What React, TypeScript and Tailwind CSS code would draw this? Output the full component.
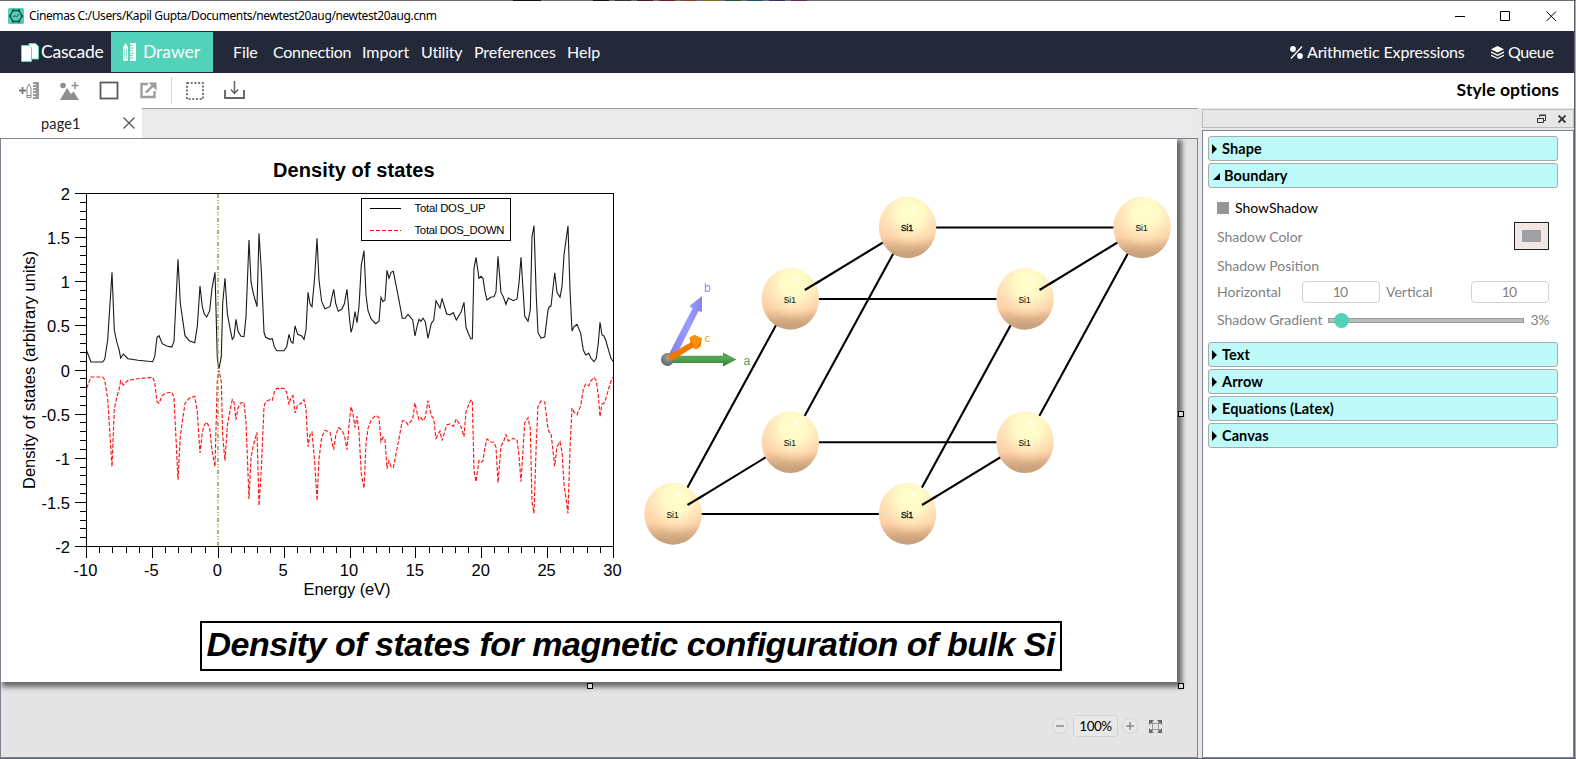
import React from "react";

const UP: number[][] = [
  [260,632],[273,666],[308,666],[314,658],[323,600],[336,397],[343,570],[350,605],[357,628],[362,654],[370,642],[384,656],[414,661],[458,665],[464,650],[471,592],[477,587],[487,611],[500,618],[515,621],[522,605],[534,358],[541,490],[555,587],[568,602],[584,608],[592,560],[600,438],[607,500],[613,522],[620,531],[629,512],[636,445],[645,397],[652,655],[657,686],[664,650],[668,490],[675,415],[682,520],[690,565],[697,598],[702,590],[708,538],[714,573],[722,588],[732,590],[738,530],[747,300],[753,425],[760,460],[771,500],[777,280],[784,390],[792,577],[797,592],[810,598],[817,596],[823,620],[830,632],[852,632],[860,620],[867,583],[873,605],[879,610],[885,558],[893,583],[905,588],[912,598],[918,570],[924,457],[930,492],[936,500],[944,410],[951,295],[957,420],[965,485],[975,506],
  [990,500],[996,470],[1001,448],[1007,490],[1015,514],[1025,508],[1033,492],[1041,448],[1048,530],[1053,577],[1058,560],[1065,515],[1071,548],[1077,500],[1084,375],[1092,332],[1098,465],[1104,512],[1113,536],[1127,551],[1137,544],[1143,472],[1149,485],[1155,480],[1161,391],[1167,415],[1173,397],[1180,394],[1187,430],[1195,470],[1207,535],[1215,535],[1224,523],[1238,540],[1245,588],[1251,560],[1257,538],[1263,544],[1269,535],[1276,545],[1284,595],[1294,550],[1301,541],[1308,482],[1320,504],[1326,475],[1340,522],[1350,525],[1360,518],[1369,540],[1383,517],[1392,487],[1398,562],[1405,580],[1412,596],[1417,596],[1422,385],[1428,352],[1437,415],[1443,409],[1449,415],[1455,455],[1461,480],[1473,471],[1482,470],[1488,455],[1494,349],[1503,458],[1510,470],[1518,493],[1525,474],[1540,482],[1551,477],[1557,430],[1563,352],[1574,528],[1584,544],[1591,510],[1596,290],[1602,257],[1609,470],[1614,578],[1623,594],[1634,591],[1644,510],[1648,500],[1653,498],[1664,398],[1671,457],[1680,472],[1686,440],[1692,345],[1704,257],[1710,450],[1716,573],[1722,560],[1731,553],[1742,580],[1750,630],[1757,645],[1766,640],[1773,655],[1782,665],[1789,655],[1795,610],[1800,547],[1806,585],[1812,588],[1818,603],[1826,632],[1833,655],[1840,665],
];
const upPts = UP.map(([x, y]) => `${(x / 3).toFixed(1)},${(140 + y / 3).toFixed(1)}`).join(" ");
const downPts = UP.map(([x, y]) => `${(x / 3).toFixed(1)},${(140 + (1377 - y) / 3).toFixed(1)}`).join(" ");

const yTicks = Array.from({ length: 41 }, (_, i) => i);
const yLabels = ["2", "1.5", "1", "0.5", "0", "-0.5", "-1", "-1.5", "-2"];
const xLabels = ["-10", "-5", "0", "5", "10", "15", "20", "25", "30"];

function Chart() {
  return (
    <g fontFamily="Liberation Sans, Arial, sans-serif" fill="#000">
      <text x="273" y="177" fontSize="20" fontWeight="bold" textLength="161.5">Density of states</text>
      <polyline points={upPts} fill="none" stroke="#1a1a1a" strokeWidth="1.1" />
      <polyline points={downPts} fill="none" stroke="#ff1414" strokeWidth="1.15" strokeDasharray="4 1.8" />
      <line x1="218" y1="194" x2="218" y2="546" stroke="#7fb04f" strokeOpacity=".8" strokeWidth="2" strokeDasharray="4 2 1 1.5 1 2.5" />
      <g stroke="#000" shapeRendering="crispEdges">
        <rect x="86.5" y="193.5" width="527" height="353" fill="none" />
        {yTicks.map((i) => (
          <line key={i} x1={i % 5 ? 80 : 75} x2="86" y1={193.5 + i * 8.825} y2={193.5 + i * 8.825} />
        ))}
        {yTicks.map((i) => (
          <line key={i} y1="546" y2={i % 5 ? 552.5 : 558} x1={86.5 + i * 13.175} x2={86.5 + i * 13.175} />
        ))}
        <rect x="361.5" y="198.5" width="149" height="42" fill="#fff" />
        <line x1="370" x2="401" y1="208.5" y2="208.5" />
        <line x1="370" x2="401" y1="230.5" y2="230.5" stroke="#ff0000" strokeDasharray="4 2" />
      </g>
      <g fontSize="11.3">
        <text x="414.5" y="212" textLength="71">Total DOS_UP</text>
        <text x="414.5" y="234" textLength="90">Total DOS_DOWN</text>
      </g>
      <g fontSize="16.5">
        {yLabels.map((t, i) => (
          <text key={t} x="70" y={200 + i * 44.125} textAnchor="end">{t}</text>
        ))}
        {xLabels.map((t, i) => (
          <text key={t} x={85.5 + i * 65.875} y="576" textAnchor="middle">{t}</text>
        ))}
        <text x="303.5" y="594.5" textLength="87">Energy (eV)</text>
        <text transform="translate(34.500 489) rotate(-90)" textLength="238">Density of states (arbitrary units)</text>
      </g>
    </g>
  );
}

const ATOMS = [
  [907.5, 227.5, 1], [1142, 227.5, 0], [790.3, 299, 0], [1025, 299, 0],
  [790.3, 442.3, 0], [1025, 442.3, 0], [673, 514, 0], [907.5, 514, 1],
];

function Molecule() {
  return (
    <g fontFamily="Liberation Sans, Arial, sans-serif">
      <defs>
        <linearGradient id="base" x1="0" y1="0" x2="0" y2="1">
          <stop offset="0" stopColor="#ffe8be" />
          <stop offset=".4" stopColor="#ffdcb4" />
          <stop offset=".65" stopColor="#fdd0a6" />
          <stop offset=".8" stopColor="#e0b48c" />
          <stop offset=".92" stopColor="#caa27c" />
          <stop offset="1" stopColor="#c8a07a" />
        </linearGradient>
        <radialGradient id="glow" cx=".56" cy=".26" r=".58">
          <stop offset="0" stopColor="#ffffcc" />
          <stop offset=".4" stopColor="#fffcc8" stopOpacity=".92" />
          <stop offset=".75" stopColor="#ffecc0" stopOpacity=".45" />
          <stop offset="1" stopColor="#ffdcb4" stopOpacity="0" />
        </radialGradient>
        <linearGradient id="bArrow" x1="0" x2="1"><stop offset="0" stopColor="#7f7ff0" /><stop offset=".6" stopColor="#9a9aff" /><stop offset="1" stopColor="#8585f0" /></linearGradient>
        <linearGradient id="aArrow" x1="0" y1="0" x2="0" y2="1"><stop offset="0" stopColor="#4c9c4c" /><stop offset=".4" stopColor="#57a657" /><stop offset="1" stopColor="#2f7a2f" /></linearGradient>
        <radialGradient id="hub" cx=".55" cy=".35" r=".6"><stop offset="0" stopColor="#a5a5a5" /><stop offset="1" stopColor="#666" /></radialGradient>
      </defs>
      <g stroke="#000" strokeWidth="2.100">
        <path d="M907.5 227.5H1142M790.3 299H1025M790.3 442.3H1025M673 514H907.5" fill="none" />
        <path d="M673 514L790.3 299M790.3 442.3L907.5 227.5M907.5 514L1025 299M1025 442.3L1142 227.5" fill="none" />
        <path d="M673 514L790.3 442.3M907.5 514L1025 442.3M790.3 299L907.5 227.5M1025 299L1142 227.5" fill="none" />
      </g>
      {ATOMS.map(([x, y]) => (
        <g key={`${x}-${y}`}>
          <ellipse cx={x} cy={y} rx="28.7" ry="30.7" fill="url(#base)" />
          <ellipse cx={x} cy={y} rx="28.7" ry="30.7" fill="url(#glow)" />
          <ellipse cx={x + 6.5} cy={y - 19.5} rx="2" ry="1.8" fill="#fffff2" />
        </g>
      ))}
      <g stroke="#000" strokeWidth="2.100">
        {[[790.3, 299], [1025, 299], [673, 514], [907.5, 514]].map(([x, y]) => (
          <line key={`${x}-${y}`} x1={x + 14.5} y1={y - 9} x2={x + 30} y2={y - 18.3} />
        ))}
      </g>
      <g fontSize="9.5" fill="#111">
        {ATOMS.map(([x, y, dbl]) => (
          <text key={`${x}-${y}`} x={x - 6.5} y={y + 3.6} textLength="12" lengthAdjust="spacingAndGlyphs" stroke="#111" strokeWidth={dbl ? 0.4 : 0.1}>Si1</text>
        ))}
      </g>
      <path d="M669 354L692.500 308.500L689.500 306L702 296L702 312L698.500 311L675 358z" fill="url(#bArrow)" />
      <path d="M668 355.700H723V352.500L736.500 359.500L723 366.500V363H668z" fill="url(#aArrow)" />
      <circle cx="667.5" cy="359.500" r="6.500" fill="url(#hub)" />
      <path d="M667.500 355.500L690.500 342.500L689.500 337.500L694.500 335L702 338.500L700.500 346.500L696 349.500L693 347.500L671 361.200z" fill="#f07800" />
      <path d="M689.500 337.500L694.500 335L702 338.500L696 349.500z" fill="#ff9008" />
      <g fontSize="12">
        <text x="704" y="292" fill="#8d8de8">b</text>
        <text x="704.500" y="341.500" fontSize="11.500" fill="#f5922a">c</text>
        <text x="743.500" y="365" fill="#5a9a5a">a</text>
      </g>
    </g>
  );
}

function Section({ title, open = false }: { title: string; open?: boolean }) {
  return (
    <div className="flex h-[25px] shrink-0 items-center rounded-[3px] border border-[#a5abab] bg-[#bffafa] pl-[3px] text-[14.5px] font-bold tracking-[0.08px] text-black">
      {open ? (
        <svg className="mr-[4px] ml-px" width="7" height="8"><path d="M7 1V8H0z" /></svg>
      ) : (
        <svg className="mr-[5px]" width="5" height="10"><path d="M0 0L5 5L0 10z" /></svg>
      )}
      <span className="whitespace-nowrap">{title}</span>
    </div>
  );
}

function PencilRuler({ className, fill, bg }: { className?: string; fill: string; bg: string }) {
  return (
    <svg className={className} width="13" height="18" viewBox="0 0 13 18">
      <path d="M2.500 0L5 4.500V16.500Q5 18 2.500 18T0 16.500V4.500z" fill={fill} />
      <path d="M1.500 6V14M3.500 6V14M0 15.200H5" stroke={bg} strokeWidth=".6" />
      <path d="M7 0H13V18H7z" fill={fill} />
      <path d="M7 2.500H9.500M7 5H10.500M7 7.500H9.500M7 10H10.500M7 12.500H9.500M7 15H10.500" stroke={bg} strokeWidth="1" />
    </svg>
  );
}

const Handle = ({ className }: { className: string }) => (
  <div className={"absolute size-[6px] border border-black bg-[#d8d8d8] " + className} />
);

export default function App() {
  return (
    <div className="flex h-[759px] w-[1576px] flex-col overflow-hidden bg-[#70747c] font-['Lato',sans-serif]">
      <div className="flex h-px shrink-0 bg-[#6e6e6e]">
        <i className="ml-[513px] h-px w-[28px] bg-[#111]" />
        <i className="ml-[52px] h-px w-[16px] bg-[#111]" />
        <i className="ml-[6px] h-px w-[16px] bg-[#333]" />
        <i className="ml-[6px] h-px w-[16px] bg-[#4a1420]" />
        <i className="ml-[6px] h-px w-[16px] bg-[#7a1c28]" />
        <i className="ml-[6px] h-px w-[16px] bg-[#80482a]" />
        <i className="ml-[6px] h-px w-[16px] bg-[#7a701c]" />
        <i className="ml-[6px] h-px w-[16px] bg-[#1f5a34]" />
        <i className="ml-[6px] h-px w-[16px] bg-[#1c4f70]" />
        <i className="ml-[6px] h-px w-[16px] bg-[#32326a]" />
        <i className="ml-[6px] h-px w-[16px] bg-[#5c2c58]" />
      </div>
      <div className="flex min-h-0 flex-1">
        <div className="flex w-[1574px] flex-col bg-[#e8e8e8]">
          {/* Title bar */}
          <header className="flex h-[30px] shrink-0 items-center bg-white pl-[8px]">
            <svg width="16" height="16" viewBox="0 0 16 16">
              <rect width="16" height="16" rx="1.500" fill="#4fd1b5" />
              <path d="M5 2.500H11L14 8L11 13.500H5L2 8z" fill="none" stroke="#1c4a48" strokeWidth="1.300" />
              <path d="M5 9L7 7.500L8.500 9L11.500 6" fill="none" stroke="#1c4a48" />
              {[[5, 2.5], [11, 2.5], [14, 8], [11, 13.5], [5, 13.5], [2, 8]].map(([x, y]) => (
                <circle key={`${x}${y}`} cx={x} cy={y} r="1.200" fill="#1c4a48" />
              ))}
            </svg>
            <span className="ml-[5px] font-['Noto_Sans',sans-serif] text-[12px] tracking-[-0.39px] whitespace-nowrap text-black">Cinemas C:/Users/Kapil Gupta/Documents/newtest20aug/newtest20aug.cnm</span>
            <svg className="mr-[17px] ml-auto" width="102" height="11" fill="none" stroke="#000">
              <path d="M0 5.500H10M45.500 .5H54.500V9.500H45.500zM91.500 .5L101 10M101 .5L91.500 10" />
            </svg>
          </header>

          {/* Navigation */}
          <nav className="flex h-[42px] shrink-0 items-center bg-[#232938] text-[16px] whitespace-nowrap text-white">
            <div className="flex w-[111px] items-center pl-[21px]">
              <svg width="18" height="19" viewBox="0 0 18 19">
                <path d="M8 .5H14.500L17.500 3.500V16H8z" fill="#fff" stroke="#5fd6bc" />
                <path d="M.5 2.500H8L10.500 5V18.500H.5z" fill="#fff" stroke="#5fd6bc" />
              </svg>
              <span className="ml-[2px] text-[17.500px] tracking-[-0.2px]">Cascade</span>
            </div>
            <div className="flex h-[40px] w-[102px] items-center bg-[#52d2b8] pl-[12px]">
              <PencilRuler fill="#fff" bg="#52d2b8" />
              <span className="ml-[7px] text-[17.500px]">Drawer</span>
            </div>
            <span className="ml-[20px] w-[40px] tracking-[-0.1px]">File</span>
            <span className="w-[89px] tracking-[-0.3px]">Connection</span>
            <span className="w-[59px]">Import</span>
            <span className="w-[53px] tracking-[-0.2px]">Utility</span>
            <span className="w-[93px] tracking-[-0.1px]">Preferences</span>
            <span>Help</span>
            <svg className="ml-auto" width="13" height="13" viewBox="0 0 13 13" fill="#fff"><circle cx="3" cy="3" r="2.900" /><circle cx="10" cy="10" r="2.900" /><path d="M1 12.500L12 .5" stroke="#fff" strokeWidth="1.300" /></svg>
            <span className="ml-[4px] w-[184px] tracking-[-0.14px]">Arithmetic Expressions</span>
            <svg width="13" height="13" viewBox="0 0 13 13" fill="#fff"><path d="M6.500 0L13 3.200L6.500 6.400L0 3.200zM0 5.300L6.500 8.500L13 5.300V6.800L6.500 9.900L0 6.800zM0 8.600L6.500 11.700L13 8.600V9.900L6.500 13L0 9.900z" /></svg>
            <span className="mr-[19px] ml-[4px] w-[47px] tracking-[-0.4px]">Queue</span>
          </nav>

          {/* Toolbar */}
          <div className="flex h-[35px] shrink-0 items-center bg-white pl-[19px]">
            <svg width="20" height="17" viewBox="0 0 20 17">
              <path d="M0 8.500H7M3.500 5V12" stroke="#777" strokeWidth="1.800" />
              <path d="M8 6L10 2L12 6V15.500H8zM8 13.500H12" fill="none" stroke="#8a8a8a" />
              <path d="M14 0H20V17H14z" fill="#9a9a9a" />
              <path d="M14 2.500H16.500M14 5.500H17M14 8.500H16.500M14 11.500H17M14 14.500H16.500" stroke="#fff" />
            </svg>
            <svg className="ml-[21px]" width="19" height="18" viewBox="0 0 19 18" fill="#8f8f8f">
              <circle cx="3" cy="3.500" r="2.800" /><path d="M0 18L7 6L11 12L13.500 9.500L19 18z" /><path d="M11.500 3.500H18.500M15 0V7" stroke="#8f8f8f" strokeWidth="1.500" />
            </svg>
            <svg className="ml-[20px]" width="20" height="19"><rect x="1.500" y="1.500" width="17" height="16" fill="none" stroke="#585c60" strokeWidth="1.800" /></svg>
            <svg className="ml-[21px]" width="17" height="17" viewBox="0 0 17 17" fill="none" stroke="#9a9a9a"><path d="M8 2H1.500V15H14.500V9" strokeWidth="2.300" /><path d="M6 10.500L14 2.500" strokeWidth="2.400" /><path d="M8.500 .5H16.500V8.500z" fill="#9a9a9a" stroke="none" /></svg>
            <div className="ml-[14px] h-[27px] w-px bg-[#d8d8d8]" />
            <svg className="ml-[14px]" width="18" height="18"><rect x="1" y="1" width="16" height="16" fill="none" stroke="#4a4a4a" strokeWidth="1.500" strokeDasharray="2 1.700" /></svg>
            <svg className="ml-[20px]" width="21" height="19" viewBox="0 0 21 19" fill="none" stroke="#666"><path d="M1 9V17H20V9" strokeWidth="1.900" /><path d="M10.500 0V12M6.800 8.500L10.500 12.300L14.200 8.500" strokeWidth="1.500" /></svg>
            <span className="mr-[15px] ml-auto text-[17.500px] font-bold tracking-[0.08px] whitespace-nowrap text-black">Style options</span>
          </div>

          {/* Workspace */}
          <div className="flex min-h-0 flex-1">
            <main className="flex w-[1198px] flex-col">
              <div className="flex h-[30px] shrink-0 bg-[#eaeaea]">
                <div className="flex w-[142px] items-center bg-white pl-[41px]">
                  <span className="w-[82px] pt-[2px] text-[14.500px] tracking-[0.15px] text-[#222]">page1</span>
                  <svg width="12" height="12"><path d="M.5 .5L11.500 11.500M11.500 .5L.5 11.500" stroke="#555" strokeWidth="1.300" /></svg>
                </div>
                <div className="flex-1 border-t border-[#a0a0a0]" />
              </div>
              <div className="relative flex-1 overflow-hidden border border-[#7f8090] bg-[#e4e4e4]">
                <div className="h-[543px] w-[1176px] bg-white shadow-[3px_3px_5px_2px_#666]">
                  <svg width="1176" height="543" viewBox="1 139 1176 543" className="block">
                    <Chart />
                    <Molecule />
                  </svg>
                </div>
                <div className="absolute top-[482px] left-[199px] flex h-[50px] w-[862px] items-center justify-center border-2 border-black">
                  <svg width="858" height="46" className="block">
                    <text x="4.500" y="33" fontFamily="Liberation Sans, Arial, sans-serif" fontSize="34" fontWeight="bold" fontStyle="italic" textLength="849">Density of states for magnetic configuration of bulk Si</text>
                  </svg>
                </div>
                <Handle className="top-[272px] left-[1177px]" />
                <Handle className="top-[544px] left-[1177px]" />
                <Handle className="top-[544px] left-[586px]" />
                <div className="absolute top-[576px] left-[1051px] flex items-center">
                  <svg width="16" height="16"><circle cx="8" cy="8" r="7.500" fill="#e8e8e8" stroke="#d3d3d3" /><path d="M4 8H12" stroke="#8a8a8a" strokeWidth="1.500" /></svg>
                  <div className="ml-[5px] flex h-[22px] w-[45px] items-center justify-center rounded-[3px] border border-[#d4d4cf] bg-[#e8e8e8] pt-px text-[13.500px] tracking-[-0.5px] text-black">100%</div>
                  <svg className="ml-[4px]" width="16" height="16"><circle cx="8" cy="8" r="7.500" fill="#e8e8e8" stroke="#d3d3d3" /><path d="M4 8H12M8 4V12" stroke="#8a8a8a" strokeWidth="1.500" /></svg>
                  <svg className="mt-px ml-[11px]" width="13" height="13" viewBox="0 0 13 13" fill="#666"><path d="M0 0H5L0 5zM13 0H8L13 5zM0 13H5L0 8zM13 13H8L13 8z" /><path d="M1.500 1.500L4 4M11.500 1.500L9 4M1.500 11.500L4 9M11.500 11.500L9 9" stroke="#666" strokeWidth="1.500" /><rect x="3.500" y="3.500" width="6" height="6" fill="none" stroke="#999" /></svg>
                </div>
              </div>
            </main>

            <aside className="ml-[4px] flex w-[372px] flex-col pt-px">
              <div className="flex h-[19px] shrink-0 items-center justify-end border border-[#bcbcb8] bg-[#e7e7e7] pr-[7px]">
                <svg width="9" height="10" fill="none" stroke="#333"><path d="M2.500 3V1.500H8.500V6.500H6.500M2.500 1H9M.5 4.500H6.500V8.500H.5zM0 4.500H7" /></svg>
                <svg className="ml-[12px]" width="8" height="8"><path d="M.5 .5L7.500 7.500M7.500 .5L.5 7.500" stroke="#333" strokeWidth="1.900" /></svg>
              </div>
              <div className="mt-[2px] flex flex-1 flex-col gap-[2px] border border-[#7f8090] bg-white pt-[5px] pr-[15px] pl-[5px]">
                <Section title="Shape" />
                <Section title="Boundary" open />
                <div className="flex h-[150px] shrink-0 flex-col pt-[8px] pr-[9px] pl-[9px] text-[14px] whitespace-nowrap text-[#7f7f7f]">
                  <div className="flex h-[19px] items-center text-black">
                    <div className="mr-[6px] size-[12px] bg-[#969696]" />ShowShadow
                  </div>
                  <div className="mt-[5px] flex h-[28px] items-center justify-between">
                    Shadow Color
                    <div className="flex h-[28px] w-[35px] items-center justify-center border border-[#222] bg-[#f0e6e6]">
                      <div className="h-[12px] w-[19px] bg-[#a0a0a4]" />
                    </div>
                  </div>
                  <div className="mt-[5px] flex h-[20px] items-center">Shadow Position</div>
                  <div className="mt-[6px] flex h-[22px] items-center">
                    <span className="w-[85px] pb-px">Horizontal</span>
                    <div className="flex h-[22px] w-[78px] items-center justify-center rounded-[4px] border border-[#d3d3cd] pr-[2px] pb-px tracking-[-0.8px]">10</div>
                    <span className="ml-[6px] w-[85px] pb-px">Vertical</span>
                    <div className="flex h-[22px] w-[78px] shrink-0 items-center justify-center rounded-[4px] border border-[#d3d3cd] pr-[2px] pb-px tracking-[-0.8px]">10</div>
                  </div>
                  <div className="mt-[7px] flex h-[20px] items-center">
                    <span className="w-[112px] pb-px">Shadow Gradient</span>
                    <div className="relative h-[5px] w-[196px] shrink-0 border border-[#9a9a9a] bg-[#bcbcbc]">
                      <div className="absolute -top-[6px] left-[5px] size-[15px] rounded-full bg-[#52d2b8]" />
                    </div>
                    <span className="ml-[6px] pb-px tracking-[-0.4px]">3%</span>
                  </div>
                </div>
                <Section title="Text" />
                <Section title="Arrow" />
                <Section title="Equations (Latex)" />
                <Section title="Canvas" />
              </div>
            </aside>
          </div>
        </div>
        <div className="w-px bg-[#5b6068]" />
        <div className="w-px bg-[#a9adb3]" />
      </div>
      <div className="h-px shrink-0 bg-[#60656d]" />
    </div>
  );
}
